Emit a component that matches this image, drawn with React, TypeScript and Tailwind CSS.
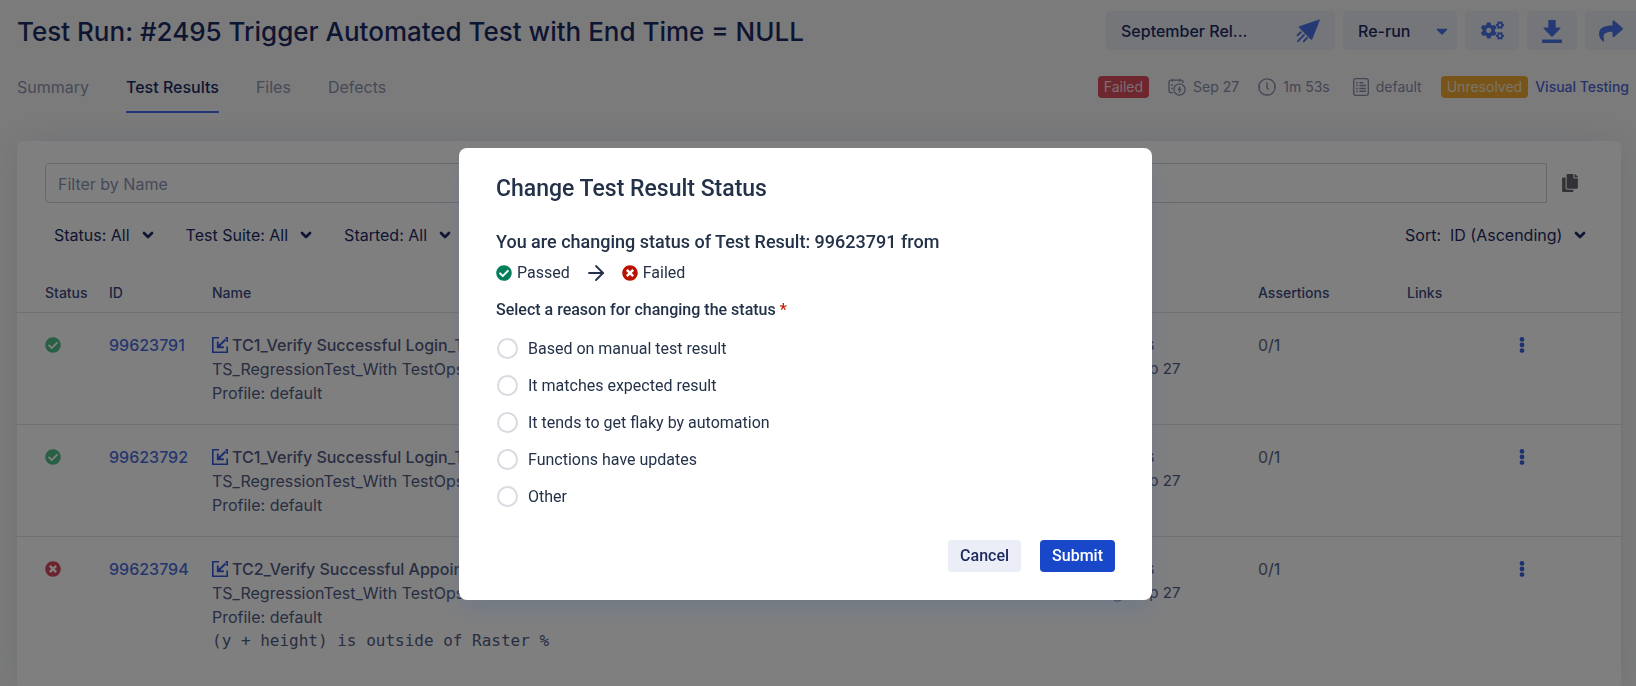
import type { ReactNode } from "react";
import { FaCaretDown, FaCheckCircle, FaCogs, FaCopy, FaShare, FaTimesCircle } from "react-icons/fa";
import { ArrowRight, ChevronDown } from "lucide-react";

type Result = {
  id: string;
  passed: boolean;
  name: string;
  suite: string;
  duration: string;
  started: string;
  assertions: number;
  message?: string;
};

const results: Result[] = [
  { id: "99623791", passed: true, name: "TC1_Verify Successful Login_Test", suite: "TS_RegressionTest_With TestOps", duration: "16s", started: "Sep 27", assertions: 1 },
  { id: "99623792", passed: true, name: "TC1_Verify Successful Login_Test", suite: "TS_RegressionTest_With TestOps", duration: "16s", started: "Sep 27", assertions: 1 },
  { id: "99623794", passed: false, name: "TC2_Verify Successful Appointment", suite: "TS_RegressionTest_With TestOps", duration: "16s", started: "Sep 27", assertions: 1, message: "(y + height) is outside of Raster %" },
];

const reasons = [
  "Based on manual test result",
  "It matches expected result",
  "It tends to get flaky by automation",
  "Functions have updates",
  "Other",
];

function PlaneIcon() {
  return (
    <svg viewBox="0 0 24 24" className="size-6" fill="currentColor" aria-hidden="true">
      <path d="M23.2.4 3.400 7.200c-.8.3-.9 1-.2 1.500l11.600 11.800c.6.6 1.300.4 1.600-.4L23.900 1.100c.1-.5-.2-.8-.7-.7z" />
      <path d="M4.800 13.200 1.500 16.400M8 15.800 2 22.200M11 18.800 7.800 22.400" stroke="currentColor" strokeWidth="1.900" strokeLinecap="round" fill="none" />
    </svg>
  );
}

function DownloadIcon() {
  return (
    <svg viewBox="0 0 20 24" className="h-6 w-5" fill="currentColor" aria-hidden="true">
      <path d="M7 1h6a.7.7 0 0 1 .7.700V8.500h4c.7 0 1 .8.5 1.300l-7.500 7.800a1 1 0 0 1-1.400 0L1.800 9.800c-.5-.5-.2-1.300.5-1.300h4V1.700A.7.7 0 0 1 7 1z" />
      <rect x="0" y="20.500" width="20" height="3.500" rx="1" />
    </svg>
  );
}

function CalendarClockIcon() {
  return (
    <svg viewBox="0 0 18 18" className="size-[18px] shrink-0" fill="none" stroke="currentColor" strokeWidth="1.300" aria-hidden="true">
      <path d="M5 14.700H2.800A1.800 1.800 0 0 1 1 12.900V4a1.800 1.800 0 0 1 1.800-1.800h10.400A1.800 1.800 0 0 1 15 4v1M4.500.8v3M11.600.8v3" />
      <path d="M3.200 7h1.800M3.200 10.500h1.400" />
      <circle cx="11.500" cy="11.500" r="5.600" />
      <path d="M12 8.600 10.600 11.500h2L11.300 14.400" />
    </svg>
  );
}

function ClockIcon() {
  return (
    <svg viewBox="0 0 18 18" className="size-[18px] shrink-0" fill="none" stroke="currentColor" strokeWidth="1.300" aria-hidden="true">
      <circle cx="9" cy="9" r="8.200" />
      <path d="M9 4.200V9.500l1.500 2M9 15.800V17M1 9h1.200M15.800 9H17" />
    </svg>
  );
}

function ProfileIcon() {
  return (
    <svg viewBox="0 0 16 18" className="h-[18px] w-4 shrink-0" fill="none" stroke="currentColor" strokeWidth="1.300" aria-hidden="true">
      <rect x=".7" y=".7" width="14.600" height="16.600" rx="2" />
      <path d="M3.200 4.800h1.600M6.400 4.800h4M3.200 7.600h1.600M6.400 7.600h6.400M3.200 10.400h1.600M6.400 10.400h6.400M3.200 13.200h1.600M6.400 13.200h6.400" strokeWidth="1.500" />
    </svg>
  );
}

function OpenIcon() {
  return (
    <svg viewBox="0 0 16 16" className="size-4 shrink-0" fill="none" stroke="currentColor" aria-hidden="true">
      <path d="M7 .8H.8v14.400h14.400V9.500M15.200 5V.8h-1.700" strokeWidth="1.600" />
      <path d="M13.500 2.500 6.500 9.500M5.800 4.500v5.700h6" strokeWidth="1.900" />
    </svg>
  );
}

function MoreIcon() {
  return (
    <svg viewBox="0 0 6 16" className="h-4 w-[6px]" fill="currentColor" aria-hidden="true">
      <circle cx="3" cy="2.400" r="2.400" />
      <circle cx="3" cy="8" r="2.400" />
      <circle cx="3" cy="13.600" r="2.400" />
    </svg>
  );
}

function Tab({ children, active }: { children: ReactNode; active?: boolean }) {
  return (
    <a
      href="#"
      aria-current={active ? "page" : undefined}
      className={
        active
          ? "border-b-2 border-[#4a72f0] pb-[13px] font-medium text-[#1c2b64]"
          : "border-b-2 border-transparent pb-[13px] text-[#8c94b0]"
      }
    >
      {children}
    </a>
  );
}

function Meta({ icon, children }: { icon: ReactNode; children: ReactNode }) {
  return (
    <span className="flex items-center gap-[7px] text-[#868dab]">
      {icon}
      {children}
    </span>
  );
}

function FilterButton({ children }: { children: ReactNode }) {
  return (
    <button type="button" aria-haspopup="listbox" className="flex items-center gap-[10px]">
      {children}
      <ChevronDown className="size-4" strokeWidth={4} />
    </button>
  );
}

function ResultRow({ result }: { result: Result }) {
  return (
    <tr className="h-28 border-t border-[#dfe1e6] align-top text-base leading-6 text-[#525c86]">
      <td className="pt-6 pl-7">
        {result.passed ? (
          <FaCheckCircle className="size-4 text-[#4fc088]" title="Passed" />
        ) : (
          <FaTimesCircle className="size-4 text-[#d9475c]" title="Failed" />
        )}
      </td>
      <td className="pt-5">
        <a href="#" className="font-medium text-[#4a6cdf]">{result.id}</a>
      </td>
      <td className="pt-5 whitespace-nowrap">
        <a href="#" className="flex items-center gap-1 font-medium">
          <span className="text-[#3558e0]"><OpenIcon /></span>
          {result.name}
        </a>
        <p>{result.suite}</p>
        <p>Profile: default</p>
        {result.message && <p className="font-['DejaVu_Sans_Mono',monospace]">{result.message}</p>}
      </td>
      <td className="pt-5 text-[15px]">
        <Meta icon={<ClockIcon />}><span className="text-[#525c86]">{result.duration}</span></Meta>
        <Meta icon={<CalendarClockIcon />}><span className="text-[#525c86]">{result.started}</span></Meta>
      </td>
      <td className="pt-5">
        <span className="text-[#66686e]">0</span>/{result.assertions}
      </td>
      <td />
      <td className="pt-6">
        <button type="button" aria-label={`Actions for ${result.id}`} className="block text-[#3d62e2]">
          <MoreIcon />
        </button>
      </td>
    </tr>
  );
}

function StatusDialog() {
  return (
    <div className="fixed inset-0 flex items-start justify-center bg-black/50 pt-[148px] pr-[25px] font-[Roboto,sans-serif] text-[#233248]">
      <form
        role="dialog"
        aria-modal="true"
        aria-labelledby="dialog-title"
        className="w-full max-w-[693px] rounded-lg bg-white px-[37px] pt-[25px] pb-7 shadow-[0_12px_20px_rgba(90,110,150,0.3)]"
      >
        <h2 id="dialog-title" className="text-[23px] leading-8 font-medium">Change Test Result Status</h2>
        <p className="mt-[25px] text-lg leading-6 font-medium">You are changing status of Test Result: 99623791 from</p>
        <div className="mt-[7px] flex h-6 items-center text-base">
          <FaCheckCircle className="mr-[5px] size-4 text-[#047f5b]" />
          Passed
          <ArrowRight className="mx-[14px] size-6" strokeWidth={1.8} />
          <FaTimesCircle className="mr-[5px] size-4 text-[#b71300]" />
          Failed
        </div>
        <fieldset>
          <legend className="pt-[13px] text-base leading-6 font-medium">
            Select a reason for changing the status <span className="text-[#c52007]">*</span>
          </legend>
          <div className="mt-2">
            {reasons.map((reason) => (
              <label key={reason} className="flex h-[37px] items-center gap-[10px] text-base">
                <input
                  type="radio"
                  name="reason"
                  className="ml-px size-[21px] appearance-none rounded-full border-2 border-[#d8dbe1] bg-white checked:border-[6px] checked:border-[#1847ca]"
                />
                {reason}
              </label>
            ))}
          </div>
        </fieldset>
        <div className="mt-[25px] flex justify-end gap-[19px] text-base font-medium">
          <button type="button" className="h-8 rounded bg-[#ebeef6] px-3 text-[#1d2b60]">Cancel</button>
          <button type="submit" className="h-8 rounded bg-[#1847ca] px-3 text-white">Submit</button>
        </div>
      </form>
    </div>
  );
}

export default function App() {
  return (
    <div className="flex min-h-screen flex-col bg-[#f7f7f7] font-[Inter,sans-serif] text-base text-[#1c2b64]">
      <header className="flex items-start justify-between pt-[11px] pl-[17px]">
        <h1 className="text-[26px] leading-[42px] font-medium whitespace-nowrap">
          Test Run: #2495 Trigger Automated Test with End Time = NULL
        </h1>
        <div className="flex h-[39px] gap-2 font-medium text-[#4a72e8]">
          <button type="button" className="flex w-[229px] items-center justify-between rounded bg-[#ebedf5] px-[15px]">
            <span className="text-[#1c2b64]">September Rel...</span>
            <PlaneIcon />
          </button>
          <button type="button" className="flex w-[114px] items-center justify-between rounded bg-[#ebedf5] pr-[6px] pl-[15px]">
            <span className="text-[#1c2b64]">Re-run</span>
            <FaCaretDown className="size-[18px]" />
          </button>
          <button type="button" aria-label="Configure" className="flex w-[54px] items-center justify-center rounded bg-[#ebedf5]">
            <FaCogs className="size-[23px]" />
          </button>
          <button type="button" aria-label="Download" className="flex w-[50px] items-center justify-center rounded bg-[#ebedf5]">
            <DownloadIcon />
          </button>
          <button type="button" aria-label="Share" className="flex w-[51px] items-center justify-center rounded-l bg-[#ebedf5]">
            <FaShare className="size-6" />
          </button>
        </div>
      </header>

      <div className="flex items-start justify-between pt-[23px] pr-[7px] pl-[17px] leading-[22px]">
        <nav className="flex gap-[37px]">
          <Tab>Summary</Tab>
          <Tab active>Test Results</Tab>
          <Tab>Files</Tab>
          <Tab>Defects</Tab>
        </nav>
        <div className="flex items-center gap-[19px] text-[14px] leading-[22px]">
          <span className="rounded bg-[#dc4c5e] px-[6px] text-[#f4dfe4]">Failed</span>
          <Meta icon={<CalendarClockIcon />}>Sep 27</Meta>
          <Meta icon={<ClockIcon />}>1m 53s</Meta>
          <div className="pl-1">
            <Meta icon={<ProfileIcon />}>default</Meta>
          </div>
          <div className="flex items-center gap-[7px]">
            <span className="rounded bg-[#f0a830] px-[6px] text-[#f5ead2]">Unresolved</span>
            <a href="#" className="font-medium text-[#4c66d6]">Visual Testing</a>
          </div>
        </div>
      </div>

      <main className="mt-7 mr-[15px] ml-[17px] flex-1 rounded-t-md bg-white shadow-[0_0_32px_rgba(136,152,190,0.2)]">
        <div className="flex items-center pt-[22px] pr-[42px] pl-7">
          <input
            type="text"
            aria-label="Filter by Name"
            placeholder="Filter by Name"
            className="h-10 min-w-0 flex-1 rounded-l border border-[#cbd3dd] px-3 pt-px placeholder:text-[#8a93b2]"
          />
          <button type="button" aria-label="Copy" className="ml-[14px] text-[#62656c]">
            <FaCopy className="size-[18px]" />
          </button>
        </div>
        <div className="flex items-center justify-between pt-5 pr-[33px] pl-[37px] leading-6">
          <div className="flex gap-[30px]">
            <FilterButton>Status: All</FilterButton>
            <FilterButton>Test Suite: All</FilterButton>
            <FilterButton>Started: All</FilterButton>
          </div>
          <label className="flex items-center gap-[9px]">
            Sort:
            <select className="appearance-none bg-transparent">
              <option>ID (Ascending)</option>
            </select>
            <ChevronDown className="size-4" strokeWidth={4} />
          </label>
        </div>
        <table className="mt-[26px] w-full table-fixed border-collapse text-left">
          <colgroup>
            <col className="w-[92px]" />
            <col className="w-[103px]" />
            <col />
            <col className="w-[152px]" />
            <col className="w-[149px]" />
            <col className="w-[112px]" />
            <col className="w-[102px]" />
          </colgroup>
          <thead>
            <tr className="h-[39px] text-[14px] text-[#3d4a82] [&>th]:font-medium">
              <th className="pl-7">Status</th>
              <th>ID</th>
              <th>Name</th>
              <th>Time</th>
              <th>Assertions</th>
              <th>Links</th>
              <th aria-label="Actions" />
            </tr>
          </thead>
          <tbody>
            {results.map((result) => (
              <ResultRow key={result.id} result={result} />
            ))}
          </tbody>
        </table>
      </main>

      <StatusDialog />
    </div>
  );
}
